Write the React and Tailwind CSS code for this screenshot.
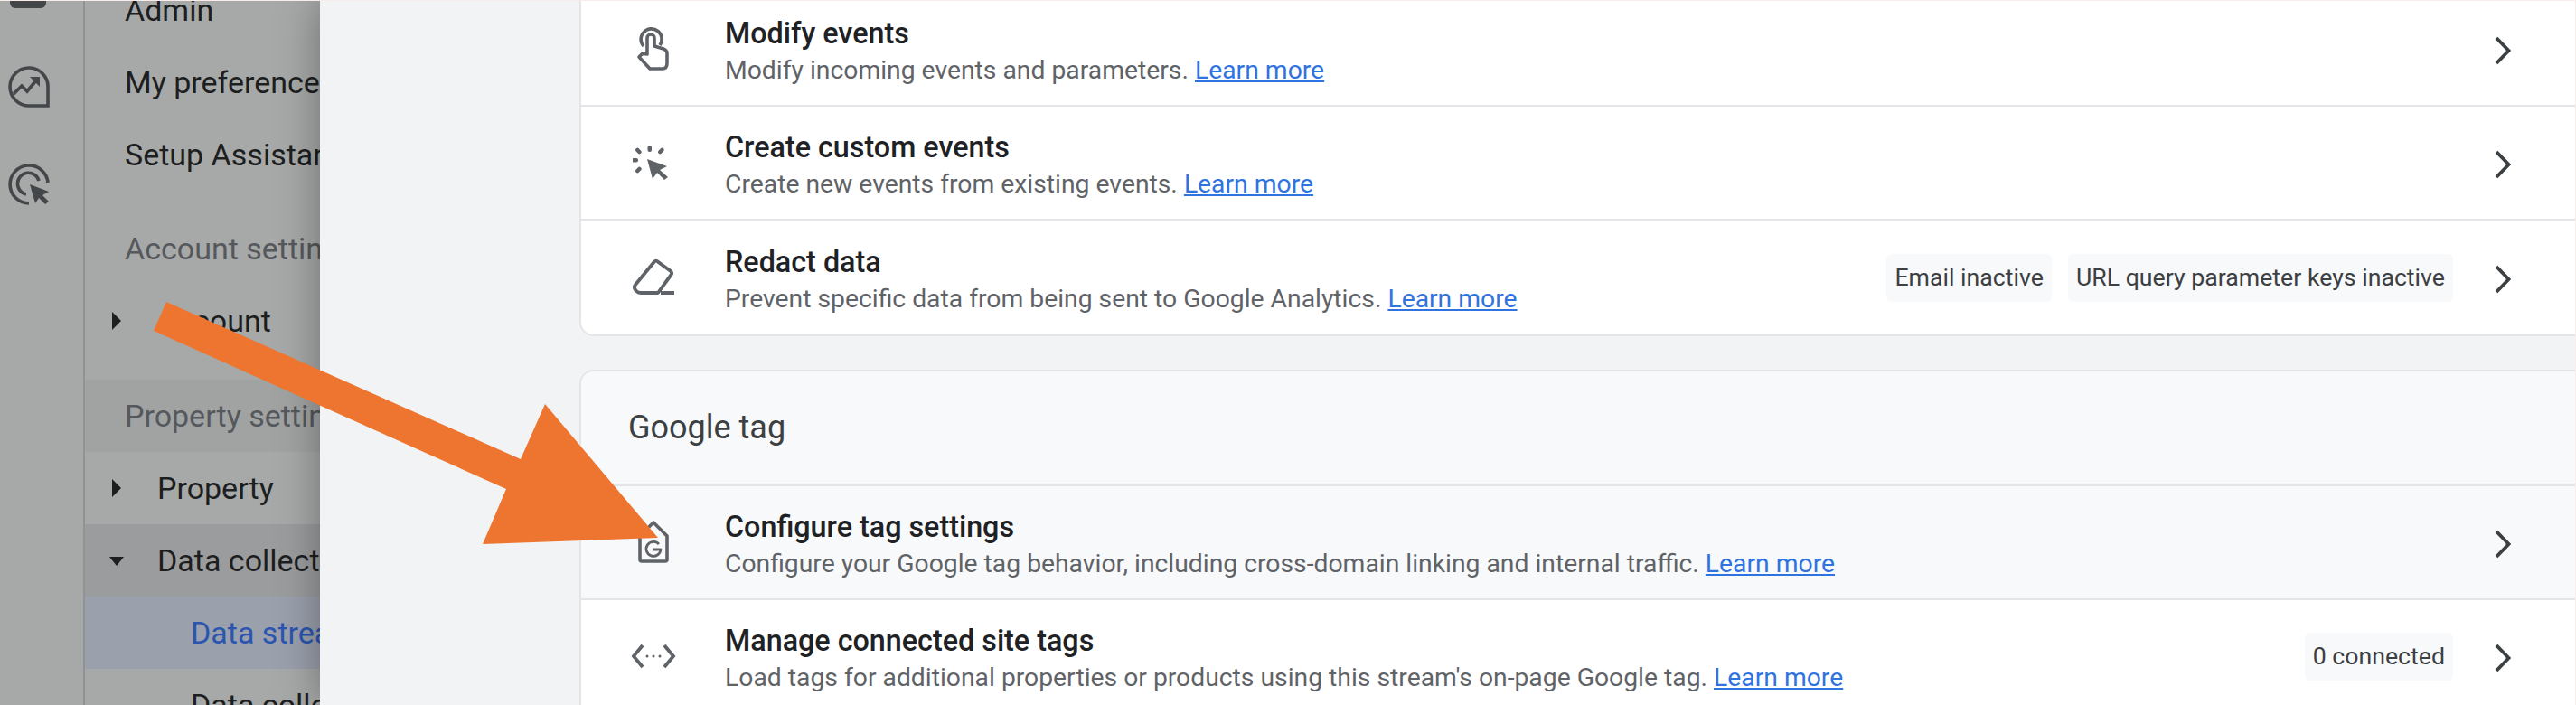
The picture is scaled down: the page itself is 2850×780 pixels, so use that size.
const FONT = "font-['Roboto','Liberation_Sans',sans-serif]";

function Chevron() {
  return (
    <svg width="18" height="32" viewBox="0 0 18 32" className="shrink-0 translate-y-[2px] text-[#3c4043]">
      <path d="M2 2 L15.500 16 L2 30" fill="none" stroke="currentColor" strokeWidth="3.800" />
    </svg>
  );
}

function TouchIcon() {
  return (
    <svg width="38" height="50" viewBox="0 0 38 50" fill="none" stroke="#5f6368" strokeWidth="3.600" strokeLinejoin="round">
      <path d="M8 22 A11.500 11.500 0 1 1 26 21" />
      <path d="M12 31 V13 a4 4 0 0 1 8 0 V22 l10 3 q4 1.500 4 5 V41 q0 6-5 6 H15 L3 34 l3.500-3.500 z" />
    </svg>
  );
}

function ClickIcon() {
  return (
    <svg width="46" height="40" viewBox="3 0 46 40" fill="#5f6368">
      <path d="M19 16 L41 24 L33 28 L42 36 L38 39 L30 31 L25 38 z" />
      <rect x="19.500" y="1" width="4.500" height="7" rx="2" />
      <rect x="7" y="3.500" width="4.500" height="7.500" rx="2" transform="rotate(-45 9 7)" />
      <rect x="32" y="3" width="4.500" height="7.500" rx="2" transform="rotate(45 34 7)" />
      <rect x="2" y="15" width="7" height="4.500" rx="2" />
      <rect x="7" y="24" width="4.500" height="7.500" rx="2" transform="rotate(45 9 28)" />
    </svg>
  );
}

function EraserIcon() {
  return (
    <svg width="50" height="44" viewBox="0 0 50 44" fill="none" stroke="#5f6368" strokeWidth="3.800" strokeLinejoin="round">
      <path d="M29 4 L44 15 Q46 17 44.500 19 L30 39 H11 Q8 39 6 37 L4.500 35 Q3 32 5 30 L26 4.500 Q27.500 3 29 4 z" />
      <path d="M33 39 H48" strokeWidth="4" />
    </svg>
  );
}

function TagIcon() {
  return (
    <svg width="36" height="50" viewBox="0 0 36 50" fill="none" stroke="#5f6368" strokeWidth="3.600" strokeLinejoin="round">
      <path d="M3 44 Q3 46 5 46 H31 Q33 46 33 44 V18 L18 3 L3 18 z" />
      <path d="M24 27 A8 8 0 1 0 26 33 H18" strokeWidth="2.800" />
    </svg>
  );
}

function CodeIcon() {
  return (
    <svg width="50" height="30" viewBox="0 0 50 30" fill="none" stroke="#5f6368" strokeWidth="3.800">
      <path d="M13 3 L3 15 L13 27" />
      <path d="M37 3 L47 15 L37 27" />
      <circle cx="18" cy="15" r="1.500" fill="#5f6368" stroke="none" />
      <circle cx="25" cy="15" r="1.500" fill="#5f6368" stroke="none" />
      <circle cx="32" cy="15" r="1.500" fill="#5f6368" stroke="none" />
    </svg>
  );
}

function SettingRow({ icon, title, description, badges = [], className = 'bg-white' }) {
  return (
    <div className={`flex h-[126px] items-center border-b-2 border-[#e3e5e8] pl-[46px] pr-[91px] ${className}`}>
      <div className="mr-[45px] flex w-[68px] shrink-0 items-center justify-center">{icon}</div>
      <div className="flex min-w-0 flex-1 flex-col gap-[7px] pt-[6px]">
        <div className="text-[32.300px] leading-[33px] font-medium text-[#202124]">{title}</div>
        <div className="text-[28.300px] leading-[33px] text-[#5f6368]">
          {description}{' '}
          <span className="text-[#2f73e0] underline underline-offset-2">Learn more</span>
        </div>
      </div>
      <div className="flex items-center gap-[18px]">
        {badges.map((badge) => (
          <span key={badge} className="flex h-[53px] items-center rounded-md bg-[#f8f9fa] px-[9px] text-[26.700px] text-[#3c4043]">
            {badge}
          </span>
        ))}
      </div>
      <div className="ml-[46px] flex">
        <Chevron />
      </div>
    </div>
  );
}

function NavItem({ children, indent = 'pl-[44px]', caret, className = '', textClass = 'text-[#1d1e20]' }) {
  return (
    <div className={`relative flex h-[80px] shrink-0 items-center whitespace-nowrap text-[34px] ${indent} ${textClass} ${className}`}>
      {caret === 'right' && (
        <svg width="10" height="20" viewBox="0 0 10 20" className="absolute left-[30px] top-[30px]">
          <path d="M0 0 L10 10 L0 20 z" fill="#1d1e20" />
        </svg>
      )}
      {caret === 'down' && (
        <svg width="16" height="10" viewBox="0 0 16 10" className="absolute left-[27px] top-[36px]">
          <path d="M0 0 H16 L8 10 z" fill="#1d1e20" />
        </svg>
      )}
      {children}
    </div>
  );
}

function SideRail() {
  return (
    <div className="flex w-[94px] shrink-0 flex-col border-r-2 border-[#909393] pl-[9px]">
      <div className="ml-[2px] h-[8px] w-[40px] rounded-b-md bg-[#44474a]" />
      <svg width="46" height="46" viewBox="0 0 46 46" fill="none" stroke="#44474a" strokeWidth="3.600" className="mt-[64px]">
        <path d="M44 24 A21 21 0 1 0 23 44 H44 z" />
        <path d="M6 31 L15 22 L21 28 L31 16" />
        <path d="M24 12 H35 V23 z" fill="#44474a" stroke="none" />
        <circle cx="38" cy="38" r="3" fill="#a7a9a8" stroke="none" />
      </svg>
      <svg width="46" height="46" viewBox="0 0 46 46" fill="none" stroke="#44474a" strokeWidth="3.600" className="mt-[62px]">
        <path d="M44 21 A21 21 0 1 0 23 44" />
        <path d="M34 19 A12 12 0 1 0 20 34" />
        <path d="M24 23 L45 31 L38 35 L45 42 L41 45 L34 38 L30 44 z" fill="#44474a" stroke="none" />
      </svg>
    </div>
  );
}

function SideNav() {
  return (
    <div className="-mt-[30px] flex w-[260px] shrink-0 flex-col bg-[#a7a9a8]">
      <NavItem>Admin</NavItem>
      <NavItem>My preferences</NavItem>
      <NavItem>Setup Assistant</NavItem>
      <div className="ml-[27px] mt-[13px] h-[2px] bg-[#8f9292]" />
      <NavItem textClass="text-[#55585c]" className="mt-[11px]">Account settings</NavItem>
      <NavItem indent="pl-[80px]" caret="right">Account</NavItem>
      <div className="ml-[27px] mt-[12px] h-[2px] bg-[#8f9292]" />
      <NavItem textClass="text-[#55585c]" className="mt-[13px] bg-[#a1a3a3]">Property settings</NavItem>
      <NavItem indent="pl-[80px]" caret="right">Property</NavItem>
      <NavItem indent="pl-[80px]" caret="down" className="bg-[#9b9c9e]">Data collection</NavItem>
      <NavItem indent="pl-[117px]" textClass="text-[#2c55b0]" className="bg-[#9aa0ac]">Data streams</NavItem>
      <NavItem indent="pl-[117px]">Data collection</NavItem>
    </div>
  );
}

export default function App() {
  return (
    <div className={`relative flex h-[780px] w-[2850px] overflow-hidden border-t border-r border-[#fbecec] bg-[#a7a9a8] ${FONT}`}>
      <SideRail />
      <SideNav />

      <div className="relative z-10 flex-1 overflow-hidden bg-[#f1f3f4] pl-[287px] shadow-[0_0_44px_rgba(0,0,0,0.35)]">
        <div className="-mt-[9px] -mr-[20px] overflow-hidden rounded-bl-2xl border-b-2 border-l-2 border-[#e3e5e8] [&>*:last-child]:border-b-0">
          <SettingRow icon={<TouchIcon />} title="Modify events" description="Modify incoming events and parameters." />
          <SettingRow icon={<ClickIcon />} title="Create custom events" description="Create new events from existing events." />
          <SettingRow
            icon={<EraserIcon />}
            title="Redact data"
            description="Prevent specific data from being sent to Google Analytics."
            badges={['Email inactive', 'URL query parameter keys inactive']}
          />
        </div>

        <div className="mt-[37px] -mr-[20px] overflow-hidden rounded-tl-2xl border-t-2 border-l-2 border-[#e3e5e8]">
          <div className="flex h-[127px] items-center border-b-[3px] border-[#e3e5e8] bg-[#f8f9fa] pl-[52px] text-[36px] text-[#3c4043]">
            Google tag
          </div>
          <SettingRow
            icon={<TagIcon />}
            title="Configure tag settings"
            description="Configure your Google tag behavior, including cross-domain linking and internal traffic."
            className="bg-[#f8f9fa]"
          />
          <SettingRow
            icon={<CodeIcon />}
            title="Manage connected site tags"
            description="Load tags for additional properties or products using this stream's on-page Google tag."
            badges={['0 connected']}
          />
        </div>
      </div>

      {/* annotation arrow drawn over the screenshot */}
      <svg width="2850" height="780" viewBox="0 0 2850 780" className="pointer-events-none absolute left-0 top-0 z-20">
        <path d="M184 333 L576 507 L603 446 L728 594 L534 601 L560 540 L170 365 z" fill="#ee752f" />
      </svg>
    </div>
  );
}
